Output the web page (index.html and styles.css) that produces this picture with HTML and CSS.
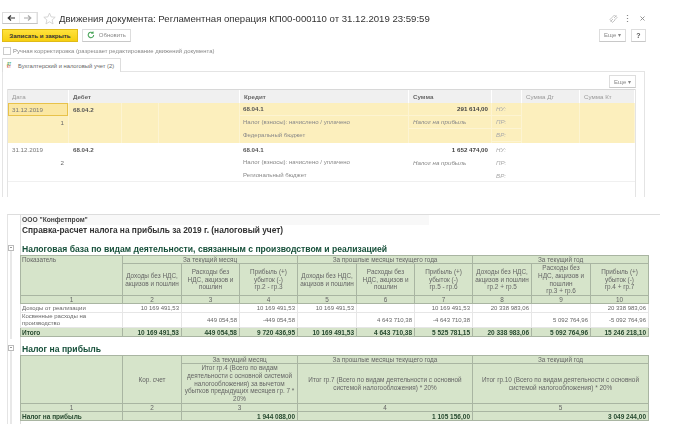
FILE: index.html
```html
<!DOCTYPE html>
<html lang="ru">
<head>
  <meta charset="UTF-8" />
  <title>Движения документа</title>
  <link rel="stylesheet" href="styles.css">
</head>
<body>
  <div class="form">
    <div class="title-row">
      <div class="nav">
        <button class="nav-btn"><svg width="8" height="6" viewBox="0 0 8 6"><path d="M8 3H2M4 .5 1.2 3 4 5.5" fill="none" stroke="#333" stroke-width="1.2"/></svg></button>
        <button class="nav-btn"><svg width="8" height="6" viewBox="0 0 8 6"><path d="M0 3h6M4 .5 6.8 3 4 5.5" fill="none" stroke="#aaa" stroke-width="1.2"/></svg></button>
      </div>
      <svg class="star" width="13" height="13" viewBox="0 0 24 24"><path d="M12 2l3 7 7.5.7-5.700 5 1.700 7.300-6.500-3.900-6.500 3.900 1.700-7.300-5.700-5 7.500-.7z" fill="none" stroke="#cfcfcf" stroke-width="1.6"/></svg>
      <h1 class="title">Движения документа: Регламентная операция КП00-000110 от 31.12.2019 23:59:59</h1>
      <div class="win-icons">
        <svg class="icon-link" width="9" height="9" viewBox="0 0 9 9"><path d="M4 5 1.5 7.5M5 4l2.500-2.500M3 3.500 5.500 1 8 3.500 5.500 6M1 5.500 3 3.500M1 5.500l2.500 3L6 6" fill="none" stroke="#b5b5b5" stroke-width=".8"/></svg>
        <svg class="icon-dots" width="3" height="9" viewBox="0 0 3 9"><path d="M1.500 1v1M1.500 4v1M1.500 7v1" stroke="#888" stroke-width="1.2"/></svg>
        <svg width="7" height="7" viewBox="0 0 7 7"><path d="M1.500 1.500l4 4M5.500 1.500l-4 4" stroke="#888" stroke-width=".9"/></svg>
      </div>
    </div>

    <div class="toolbar">
      <button class="btn-save">Записать и закрыть</button>
      <button class="btn btn-refresh"><svg width="8" height="8" viewBox="0 0 8 8"><path d="M6.800 4A2.800 2.800 0 1 1 5.800 1.800M6.200 .3v2H4.200" fill="none" stroke="#4aa55a" stroke-width="1.1"/></svg>Обновить</button>
      <div class="toolbar-right">
        <button class="btn btn-more">Еще <span class="caret">▾</span></button>
        <button class="btn btn-help">?</button>
      </div>
    </div>

    <label class="check-row"><span class="check"></span>Ручная корректировка (разрешает редактирование движений документа)</label>

    <div class="tabs">
      <div class="tab"><span class="tab-icon"><span class="dt">ДТ</span><span class="kt">КТ</span></span>Бухгалтерский и налоговый учет (2)</div>
    </div>

    <div class="tab-panel">
      <div class="panel-bar"><button class="btn btn-more">Еще <span class="caret">▾</span></button></div>
      <div class="moves">
        <div class="moves-head">
          <div>Дата</div><div class="bold">Дебет</div><div class="bold">Кредит</div><div class="bold">Сумма</div><div></div><div>Сумма Дт</div><div>Сумма Кт</div>
        </div>
        <div class="move selected">
          <div class="date-cell"><span class="date current">31.12.2019</span><span class="num">1</span></div>
          <div class="acc">68.04.2</div>
          <div class="credit-cell"><b>68.04.1</b><span>Налог (взносы): начислено / уплачено</span><span>Федеральный бюджет</span></div>
          <div class="sum-cell"><b>291 614,00</b><i>Налог на прибыль</i></div>
          <div class="type-cell"><i>НУ:</i><i>ПР:</i><i>ВР:</i></div>
          <div></div><div></div>
        </div>
        <div class="move">
          <div class="date-cell"><span class="date">31.12.2019</span><span class="num">2</span></div>
          <div class="acc">68.04.2</div>
          <div class="credit-cell"><b>68.04.1</b><span>Налог (взносы): начислено / уплачено</span><span>Региональный бюджет</span></div>
          <div class="sum-cell"><b>1 652 474,00</b><i>Налог на прибыль</i></div>
          <div class="type-cell"><i>НУ:</i><i>ПР:</i><i>ВР:</i></div>
          <div></div><div></div>
        </div>
      </div>
    </div>
  </div>

  <div class="report">
    <div class="gutter">
      <span class="fold fold-1"></span>
      <span class="fold fold-2"></span>
    </div>
    <div class="sheet">
      <div class="org">ООО "Конфетпром"</div>
      <div class="doc-title">Справка-расчет налога на прибыль за 2019 г. (налоговый учет)</div>
      <h2 class="section section-first">Налоговая база по видам деятельности, связанным с производством и реализацией</h2>
      <table class="tax">
        <colgroup>
          <col class="c1"><col class="c2"><col class="c3"><col class="c4"><col class="c5"><col class="c6"><col class="c7"><col class="c8"><col class="c9"><col class="c10">
        </colgroup>
        <tr class="r-group">
          <th rowspan="2" class="left top">Показатель</th>
          <th colspan="3">За текущий месяц</th>
          <th colspan="3">За прошлые месяцы текущего года</th>
          <th colspan="3">За текущий год</th>
        </tr>
        <tr class="r-head">
          <th>Доходы без НДС,<br>акцизов и пошлин</th>
          <th>Расходы без<br>НДС, акцизов и<br>пошлин</th>
          <th>Прибыль (+)<br>убыток (-)<br>гр.2 - гр.3</th>
          <th>Доходы без НДС,<br>акцизов и пошлин</th>
          <th>Расходы без<br>НДС, акцизов и<br>пошлин</th>
          <th>Прибыль (+)<br>убыток (-)<br>гр.5 - гр.6</th>
          <th>Доходы без НДС,<br>акцизов и пошлин<br>гр.2 + гр.5</th>
          <th>Расходы без<br>НДС, акцизов и<br>пошлин<br>гр.3 + гр.6</th>
          <th>Прибыль (+)<br>убыток (-)<br>гр.4 + гр.7</th>
        </tr>
        <tr class="r-num">
          <th>1</th><th>2</th><th>3</th><th>4</th><th>5</th><th>6</th><th>7</th><th>8</th><th>9</th><th>10</th>
        </tr>
        <tr class="r-data">
          <td class="left">Доходы от реализации</td>
          <td>10 169 491,53</td><td></td><td>10 169 491,53</td>
          <td>10 169 491,53</td><td></td><td>10 169 491,53</td>
          <td>20 338 983,06</td><td></td><td>20 338 983,06</td>
        </tr>
        <tr class="r-data r-tall">
          <td class="left">Косвенные расходы на производство</td>
          <td></td><td>449 054,58</td><td>-449 054,58</td>
          <td></td><td>4 643 710,38</td><td>-4 643 710,38</td>
          <td></td><td>5 092 764,96</td><td>-5 092 764,96</td>
        </tr>
        <tr class="r-total">
          <th class="left">Итого</th>
          <th>10 169 491,53</th><th>449 054,58</th><th>9 720 436,95</th>
          <th>10 169 491,53</th><th>4 643 710,38</th><th>5 525 781,15</th>
          <th>20 338 983,06</th><th>5 092 764,96</th><th>15 246 218,10</th>
        </tr>
      </table>

      <h2 class="section section-second">Налог на прибыль</h2>
      <table class="tax">
        <colgroup>
          <col class="c1"><col class="c2"><col class="t2-3"><col class="t2-4"><col class="t2-5">
        </colgroup>
        <tr class="r-group">
          <th rowspan="2"></th>
          <th rowspan="2">Кор. счет</th>
          <th>За текущий месяц</th>
          <th>За прошлые месяцы текущего года</th>
          <th>За текущий год</th>
        </tr>
        <tr class="r-head2">
          <th>Итог гр.4 (Всего по видам<br>деятельности с основной системой<br>налогообложения) за вычетом<br>убытков предыдущих месяцев гр. 7 *<br>20%</th>
          <th>Итог гр.7 (Всего по видам деятельности с основной<br>системой налогообложения) * 20%</th>
          <th>Итог гр.10 (Всего по видам деятельности с основной<br>системой налогообложения) * 20%</th>
        </tr>
        <tr class="r-num">
          <th>1</th><th>2</th><th>3</th><th>4</th><th>5</th>
        </tr>
        <tr class="r-total">
          <th class="left">Налог на прибыль</th>
          <th></th><th>1 944 088,00</th><th>1 105 156,00</th><th>3 049 244,00</th>
        </tr>
      </table>
    </div>
  </div>
</body>
</html>
```

FILE: styles.css
```css
* {
  margin: 0;
  padding: 0;
  box-sizing: border-box;
}

body {
  font-family: "Liberation Sans", Arial, sans-serif;
  background: #fff;
  color: #555;
  width: 674px;
  height: 424px;
  overflow: hidden;
  font-size: 6.2px;
  filter: blur(.3px);
}

button {
  font-family: inherit;
  color: inherit;
}

/* Форма движений */

.form {
  height: 214px;
  padding-top: 12px;
}

.title-row {
  display: flex;
  align-items: center;
  height: 12px;
  padding-left: 2px;
}

.nav {
  display: flex;
  width: 36px;
  height: 12px;
  background: #fff;
  border: 1px solid #ddd;
  border-bottom-color: #c4c4c4;
}

.nav-btn {
  flex: 1;
  display: flex;
  align-items: center;
  justify-content: center;
  background: none;
  border: none;
  border-right: 1px solid #eee;
}

.star {
  margin-left: 5px;
}

.title {
  margin-left: 3px;
  font-size: 9.6px;
  font-weight: 400;
  color: #333;
  white-space: nowrap;
}

.win-icons {
  display: flex;
  align-items: center;
  margin-left: auto;
  padding-right: 28px;
}

.icon-dots {
  margin: 0 10px 0 8px;
}

.toolbar {
  display: flex;
  align-items: center;
  height: 14px;
  margin-top: 4px;
  padding-left: 2px;
}

.btn-save {
  width: 76px;
  height: 13px;
  background: linear-gradient(#ffe23c, #f6cf10);
  border: 1px solid #e0bb18;
  font-size: 6.2px;
  font-weight: 700;
  color: #333;
}

.btn {
  height: 13px;
  background: #fff;
  border: 1px solid #ddd;
  border-bottom-color: #c8c8c8;
  font-size: 6px;
  color: #888;
  padding: 0 4px;
}

.btn-more {
  width: 27px;
}

.btn-refresh {
  display: flex;
  align-items: center;
  gap: 4px;
  width: 49px;
  margin-left: 4px;
  padding-left: 4px;
}

.btn-help {
  color: #555;
  font-weight: 700;
  margin-left: 5px;
  width: 15px;
  padding: 0;
  font-size: 7px;
}

.toolbar-right {
  display: flex;
  margin-left: auto;
  padding-right: 28px;
}

.caret {
  font-size: 5.5px;
}

.check-row {
  display: flex;
  align-items: center;
  height: 9px;
  margin-top: 4px;
  padding-left: 3px;
  font-size: 5.9px;
  color: #888;
}

.check {
  width: 8px;
  height: 8px;
  background: #fff;
  border: 1px solid #ccc;
  margin-right: 2px;
}

.tabs {
  height: 13px;
  margin-top: 3px;
  padding-left: 2px;
}

.tab {
  display: flex;
  align-items: center;
  width: 119px;
  height: 14px;
  position: relative;
  z-index: 1;
  background: #fff;
  border: 1px solid #ddd;
  border-bottom: none;
  padding-left: 4px;
  font-size: 5.8px;
  color: #666;
  white-space: nowrap;
}

.tab-icon {
  display: flex;
  flex-direction: column;
  width: 6px;
  margin-right: 5px;
  font-size: 3px;
  line-height: 3px;
  font-weight: 700;
}

.dt {
  color: #4aa55a;
}

.kt {
  color: #d05a4a;
}

.tab-panel {
  width: 643px;
  height: 126px;
  margin-left: 2px;
  border: 1px solid #e4e4e4;
  border-bottom: none;
  padding-left: 4px;
}

.panel-bar {
  display: flex;
  justify-content: flex-end;
  height: 17px;
  padding: 3px 8px 0 0;
}

.moves {
  width: 629px;
  height: 108px;
  border-left: 1px solid #e4e4e4;
  border-right: 1px solid #e4e4e4;
}

.moves-head,
.move {
  display: grid;
  grid-template-columns: 61px 171px 169px 83px 30px 58px 55px;
}

.moves-head {
  height: 14px;
  background: #f0f0f0;
  border-top: 1px solid #d8d8d8;
  line-height: 13px;
  color: #999;
}

.moves-head > div {
  padding-left: 4px;
  border-right: 1px solid #fff;
}

.moves-head .bold {
  color: #666;
  font-weight: 700;
}

.move {
  height: 39.5px;
  border-bottom: 1px solid #f0f0f0;
  line-height: 13px;
  color: #666;
}

.move.selected {
  background: #fcefbd;
  border-bottom: none;
}

.move > div {
  border-right: 1px solid transparent;
}

.move.selected > div {
  border-right-color: #fdf4d2;
}

.move.selected .acc {
  background-image: linear-gradient(#fdf4d2, #fdf4d2), linear-gradient(#fdf4d2, #fdf4d2);
  background-size: 1px 100%;
  background-position: 52px 0, 89px 0;
  background-repeat: no-repeat;
}

.move.selected .type-cell i,
.move.selected .sum-cell b,
.move.selected .sum-cell i,
.move.selected .credit-cell b {
  height: 13px;
  line-height: 12px;
  border-bottom: 1px solid #fdf4d2;
}

.date-cell {
  display: flex;
  flex-direction: column;
}

.date {
  padding-left: 4px;
  height: 13px;
  color: #777;
}

.date.current {
  background: #fbe7a2;
  border: 1px solid #e8c24a;
  line-height: 11px;
  padding-left: 3px;
}

.num {
  text-align: right;
  padding-right: 4px;
}

.acc {
  padding-left: 4px;
  font-weight: 700;
  color: #555;
}

.credit-cell,
.sum-cell,
.type-cell {
  display: flex;
  flex-direction: column;
}

.credit-cell b {
  padding-left: 3px;
  color: #555;
}

.credit-cell span {
  padding-left: 3px;
  font-size: 6.05px;
  color: #888;
  white-space: nowrap;
}

.sum-cell b {
  text-align: right;
  padding-right: 3px;
  color: #444;
}

.sum-cell i {
  padding-left: 4px;
  color: #888;
}

.type-cell i {
  padding-left: 4px;
  color: #aaa;
}

/* Отчет */

.report {
  display: flex;
  height: 210px;
}

.gutter {
  position: relative;
  flex: none;
  width: 13px;
  margin-left: 7px;
  border-left: 1px solid #e4e4e4;
  border-top: 1px solid #ddd;
}

.fold {
  position: absolute;
  left: 0;
  width: 6px;
  height: 6px;
  background: #fff;
  border: 1px solid #bbb;
}

.fold::after {
  content: "";
  position: absolute;
  left: 1px;
  right: 1px;
  top: 1px;
  height: 1px;
  background: #999;
}

.fold::before {
  content: "";
  position: absolute;
  left: 1px;
  top: 5px;
  width: 2px;
  background: #e8e8e8;
}

.fold-1 {
  top: 30px;
}

.fold-1::before {
  height: 88px;
}

.fold-2 {
  top: 130px;
}

.fold-2::before {
  height: 80px;
}

.sheet {
  width: 640px;
  border-top: 1px solid #ddd;
  border-left: 1px solid #ddd;
}

.org {
  width: 408px;
  height: 10px;
  line-height: 9px;
  padding-left: 1px;
  font-size: 6.7px;
  font-weight: 700;
  color: #444;
  background: #f8f8f8;
}

.doc-title {
  height: 11px;
  line-height: 11px;
  padding-left: 1px;
  font-size: 8.35px;
  font-weight: 700;
  color: #333;
}

.section {
  padding-left: 1px;
  font-size: 8.6px;
  font-weight: 700;
  color: #17503a;
  white-space: nowrap;
  height: 11px;
  line-height: 11px;
}

.section-first {
  margin-top: 8px;
}

.section-second {
  margin-top: 7px;
}

.tax {
  width: 628px;
  margin-left: -1px;
  table-layout: fixed;
  border-collapse: collapse;
  font-size: 6.4px;
  color: #666;
}

.tax th,
.tax td {
  overflow: hidden;
  white-space: nowrap;
  line-height: 7px;
  border: 1px solid #a9b5a2;
}

.tax th {
  background: #d6e4ca;
  font-weight: 400;
  text-align: center;
  vertical-align: middle;
}

.tax td {
  font-size: 6px;
  text-align: right;
  padding-right: 2px;
  border: 1px solid #e6e6e6;
  vertical-align: middle;
}

.tax .left {
  text-align: left;
  padding-left: 1px;
}

.tax td.left {
  white-space: normal;
}

.tax .top {
  vertical-align: top;
}

.c1 { width: 102px; }
.c2 { width: 59px; }
.c3 { width: 58px; }
.c4 { width: 58px; }
.c5 { width: 59px; }
.c6 { width: 58px; }
.c7 { width: 58px; }
.c8 { width: 59px; }
.c9 { width: 59px; }
.c10 { width: 58px; }
.t2-3 { width: 116px; }
.t2-4 { width: 175px; }
.t2-5 { width: 176px; }

.r-group { height: 8px; }

.tax .r-head th {
  height: 32px;
  line-height: 7.75px;
}

.tax .r-head2 th {
  height: 40px;
  line-height: 7.8px;
}

.r-num { height: 8px; }
.r-data { height: 9px; }
.r-tall { height: 15px; }

.tax .r-total {
  height: 9px;
}

.tax .r-total th {
  font-size: 6.5px;
  text-align: right;
  padding-right: 2px;
  font-weight: 700;
  color: #26492f;
}

.tax .r-total th.left {
  text-align: left;
  padding-left: 1px;
}
```
